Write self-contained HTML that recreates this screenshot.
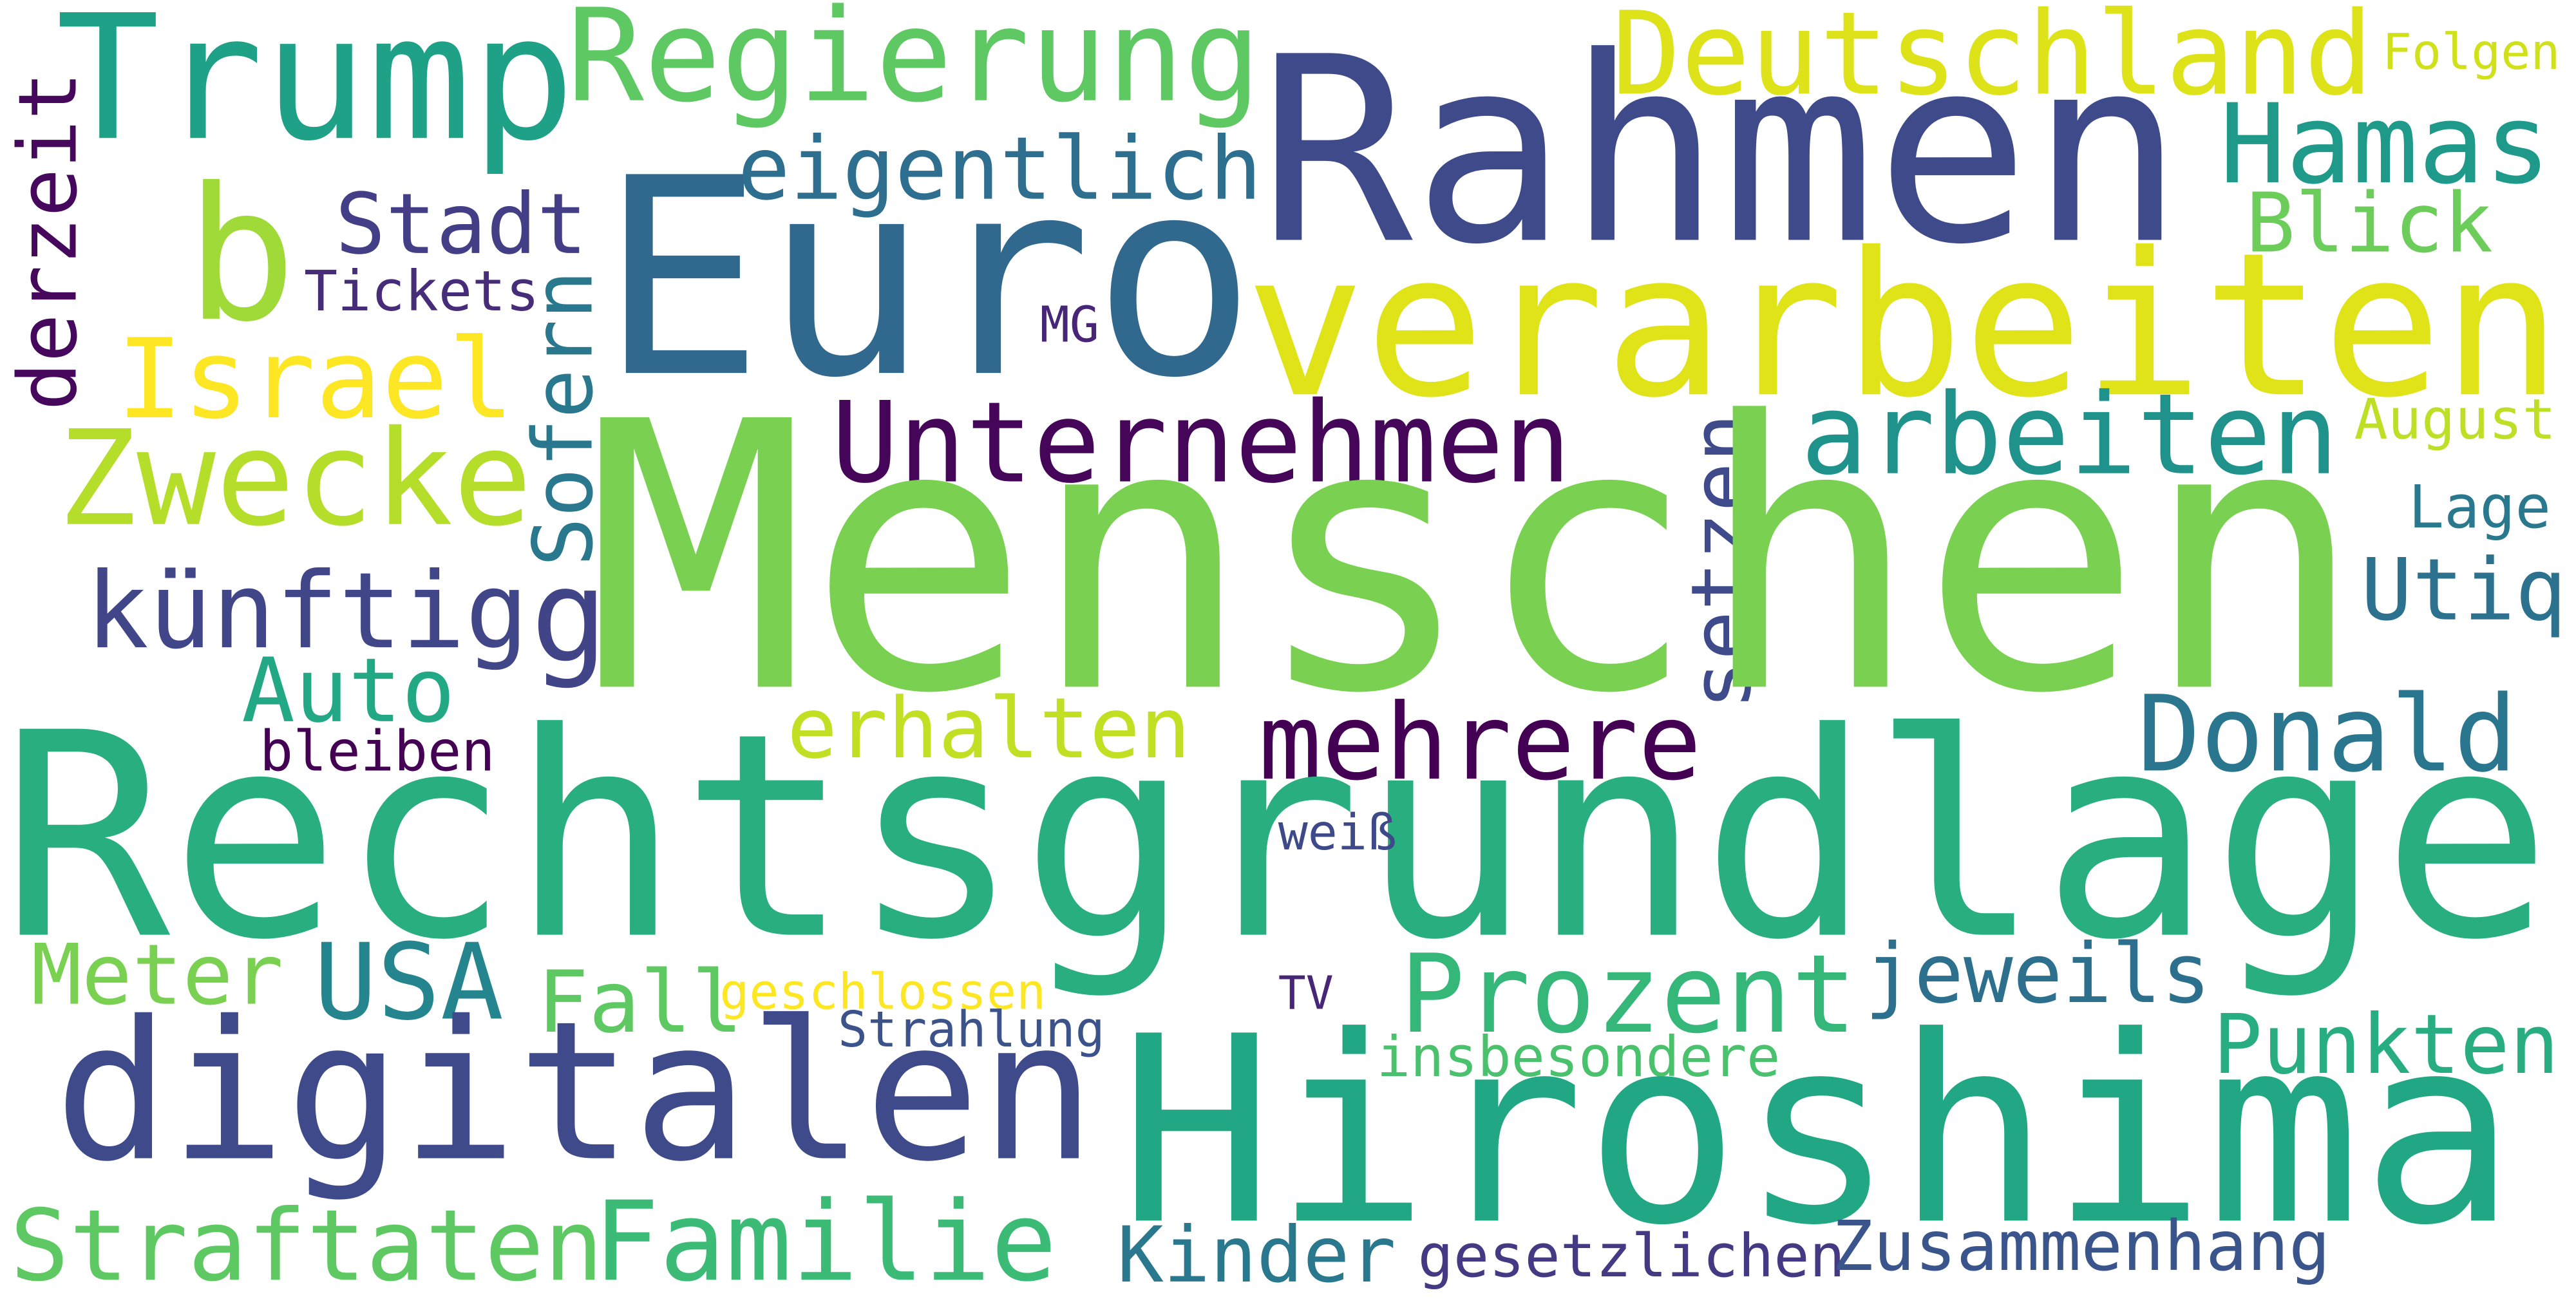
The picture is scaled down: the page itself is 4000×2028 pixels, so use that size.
<!DOCTYPE html>
<html><head><meta charset="utf-8"><style>
html,body{margin:0;padding:0;background:#fff;overflow:hidden}
#c{position:absolute;left:0;top:0;width:1568px;height:784px;transform:scale(2.55102);transform-origin:0 0;background:#fff}
.w{position:absolute;white-space:nowrap;line-height:1;font-family:"DejaVu Sans Mono","Liberation Mono",monospace}
.r{transform-origin:0 0;transform:rotate(-90deg)}
</style></head><body><div id="c">
<span class="w" style="left:34px;top:-4px;font-size:105px;color:#1fa187">Trump</span>
<span class="w" style="left:345px;top:-4px;font-size:78px;color:#5ec962">Regierung</span>
<span class="w" style="left:766px;top:14px;font-size:156px;color:#3e4a89">Rahmen</span>
<span class="w" style="left:981px;top:-2px;font-size:70px;color:#dde318">Deutschland</span>
<span class="w" style="left:1450px;top:18px;font-size:30px;color:#d0e11c">Folgen</span>
<span class="w" style="left:365px;top:88px;font-size:166px;color:#31688e">Euro</span>
<span class="w" style="left:113px;top:100px;font-size:112px;color:#a0da39">b</span>
<span class="w" style="left:449px;top:77px;font-size:53px;color:#2e6e8e">eigentlich</span>
<span class="w" style="left:1351px;top:55px;font-size:67px;color:#1f9a8a">Hamas</span>
<span class="w" style="left:204px;top:112px;font-size:51px;color:#433e85">Stadt</span>
<span class="w" style="left:1367px;top:111px;font-size:50px;color:#6ccd5a">Blick</span>
<span class="w" style="left:185px;top:161px;font-size:34px;color:#472c7a">Tickets</span>
<span class="w r" style="left:5px;top:250px;font-size:49px;color:#46085c">derzeit</span>
<span class="w r" style="left:318px;top:345px;font-size:50px;color:#2a788e">Sofern</span>
<span class="w" style="left:758px;top:138px;font-size:121px;color:#dfe318">verarbeiten</span>
<span class="w" style="left:633px;top:184px;font-size:30px;color:#482677">MG</span>
<span class="w" style="left:71px;top:198px;font-size:67px;color:#fde725">Israel</span>
<span class="w" style="left:506px;top:237px;font-size:68px;color:#450559">Unternehmen</span>
<span class="w" style="left:1096px;top:232px;font-size:68px;color:#20928c">arbeiten</span>
<span class="w" style="left:1433px;top:239px;font-size:34px;color:#bddf26">August</span>
<span class="w" style="left:35px;top:252px;font-size:80px;color:#b5de2b">Zwecke</span>
<span class="w" style="left:1466px;top:292px;font-size:36px;color:#2a788e">Lage</span>
<span class="w r" style="left:1023px;top:432px;font-size:50px;color:#3e4a89">setzen</span>
<span class="w" style="left:323px;top:337px;font-size:78px;color:#414487">g</span>
<span class="w" style="left:52px;top:341px;font-size:64px;color:#404688">künftig</span>
<span class="w" style="left:1437px;top:334px;font-size:52px;color:#2c728e">Utiq</span>
<span class="w" style="left:147px;top:394px;font-size:54px;color:#22a884">Auto</span>
<span class="w" style="left:479px;top:419px;font-size:51px;color:#c2df23">erhalten</span>
<span class="w" style="left:766px;top:421px;font-size:64px;color:#440154">mehrere</span>
<span class="w" style="left:1301px;top:416px;font-size:64px;color:#2a768e">Donald</span>
<span class="w" style="left:158px;top:441px;font-size:34px;color:#440154">bleiben</span>
<span class="w" style="left:356px;top:229px;font-size:225px;color:#7ad151">Menschen</span>
<span class="w" style="left:0px;top:424px;font-size:172px;color:#29af7f">Rechtsgrundlage</span>
<span class="w" style="left:778px;top:493px;font-size:30px;color:#3e4989">weiß</span>
<span class="w" style="left:19px;top:569px;font-size:51px;color:#7ad151">Meter</span>
<span class="w" style="left:191px;top:567px;font-size:64px;color:#25858e">USA</span>
<span class="w" style="left:327px;top:585px;font-size:52px;color:#5ec962">Fall</span>
<span class="w" style="left:438px;top:590px;font-size:30px;color:#fde725">geschlossen</span>
<span class="w" style="left:852px;top:573px;font-size:66px;color:#35b779">Prozent</span>
<span class="w" style="left:1135px;top:568px;font-size:50px;color:#2d708e">jeweils</span>
<span class="w" style="left:778px;top:591px;font-size:28px;color:#482677">TV</span>
<span class="w" style="left:510px;top:613px;font-size:30px;color:#3b528b">Strahlung</span>
<span class="w" style="left:1347px;top:611px;font-size:50px;color:#27ad81">Punkten</span>
<span class="w" style="left:838px;top:627px;font-size:34px;color:#4ac16d">insbesondere</span>
<span class="w" style="left:33px;top:606px;font-size:117px;color:#3e4a89">digitalen</span>
<span class="w" style="left:681px;top:611px;font-size:157px;color:#22a785">Hiroshima</span>
<span class="w" style="left:6px;top:729px;font-size:60px;color:#5ec962">Straftaten</span>
<span class="w" style="left:361px;top:723px;font-size:67px;color:#3bbb75">Familie</span>
<span class="w" style="left:680px;top:741px;font-size:47px;color:#2a788e">Kinder</span>
<span class="w" style="left:863px;top:748px;font-size:36px;color:#443983">gesetzlichen</span>
<span class="w" style="left:1115px;top:738px;font-size:42px;color:#3a548c">Zusammenhang</span>
</div></body></html>
